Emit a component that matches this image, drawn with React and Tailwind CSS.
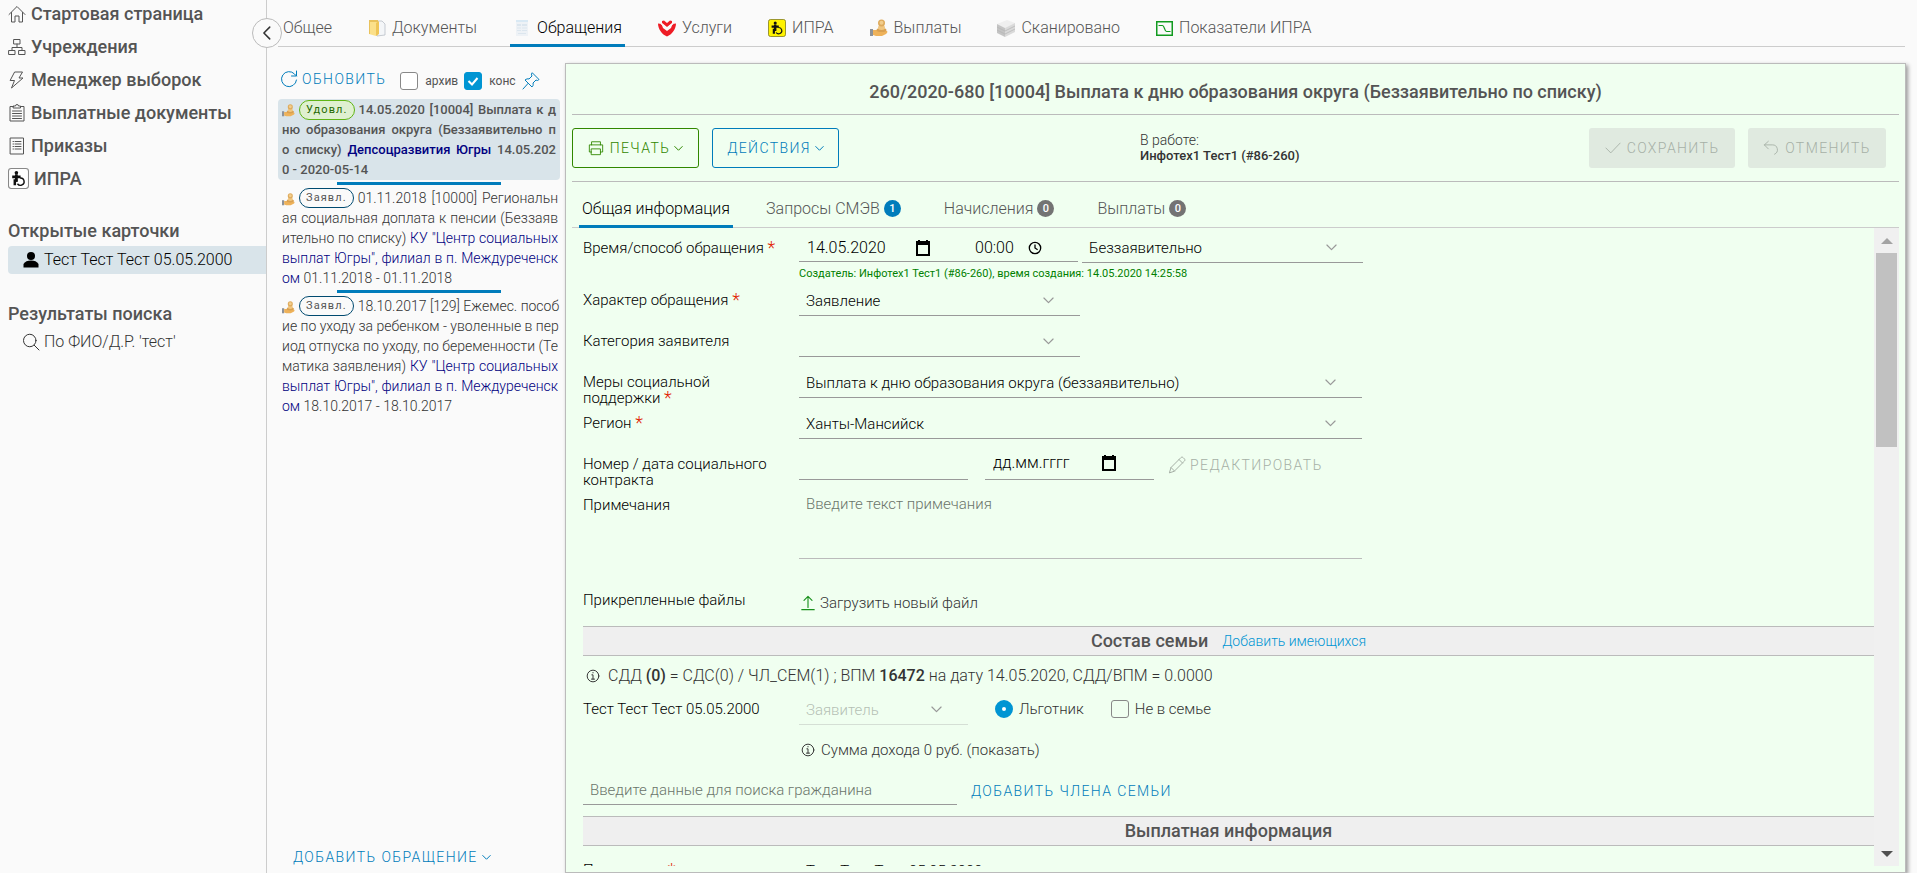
import React, { useState } from 'react'

// Outline icons, drawn on a 36 unit grid
const Icon = ({ children, className = 'w-[18px] h-[18px]', stroke = 2 }) => (
  <svg
    viewBox="0 0 36 36"
    fill="none"
    stroke="currentColor"
    strokeWidth={stroke}
    strokeLinecap="round"
    strokeLinejoin="round"
    className={`shrink-0 ${className}`}
    aria-hidden="true"
  >
    {children}
  </svg>
)

const HomeIcon = () => (
  <Icon><path d="M2 19 18 3l16 16M7 15v19h7V22h8v12h7V15" /></Icon>
)
const OrgIcon = () => (
  <Icon><path d="M12 3h12v9H12zM2 25h12v8H2zM22 25h12v8H22zM18 12v7M8 25v-6h20v6" /></Icon>
)
const BoltIcon = () => (
  <Icon><path d="M14 2h15l-7 12h8L7 34l6-15H5z" /></Icon>
)
const ClipboardIcon = () => (
  <Icon><path d="M11 5H4v29h28V5h-7M11 8h14V4h-4a3 3 0 0 0-6 0h-4zM9 14h18M9 19h18M9 24h18M9 29h18" /></Icon>
)
const ListIcon = () => (
  <Icon><path d="M5 2h26v32H5zM10 9h1M14 9h12M10 14h1M14 14h12M10 19h1M14 19h12M10 24h1M14 24h12" /></Icon>
)
const SearchIcon = () => (
  <Icon><path d="M28 15a12.500 12.500 0 1 1-25 0 12.500 12.500 0 0 1 25 0zM24.500 24.500 34 34" /></Icon>
)
const UserIcon = () => (
  <svg viewBox="0 0 36 36" fill="currentColor" className="w-[18px] h-[18px] shrink-0" aria-hidden="true">
    <circle cx="18" cy="10" r="8" />
    <path d="M3 33V26c3-5 8-7 15-7s12 2 15 7v7z" />
  </svg>
)
const RefreshIcon = () => (
  <Icon className="w-[18px] h-[18px]"><path d="M33 20a15 15 0 1 1-4-12l4 4M33 2v10H23" /></Icon>
)
const PinIcon = () => (
  <Icon className="w-[18px] h-[18px]"><path d="M21 2 34 15l-3 2-3-1-6 6c1 4 0 6-2 8L6 16c3-2 5-3 8-2l6-6-1-3zM12 23 2 34" /></Icon>
)
const PrinterIcon = () => (
  <Icon className="w-4 h-4"><path d="M8 11V4h20v7M8 27H3V11h30v16h-5M8 20h20v13H8z" /></Icon>
)
const CheckIcon = () => (
  <Icon className="w-4 h-4"><path d="M2 18 13 29 34 7" /></Icon>
)
const UndoIcon = () => (
  <Icon className="w-4 h-4"><path d="M12 3 3 11l9 9M3 11h18a11 11 0 0 1 5 21" /></Icon>
)
const PencilIcon = () => (
  <Icon className="w-[18px] h-[18px]"><path d="M3 33 6 23 26 3c1-1 3-1 4 0l3 3c1 1 1 3 0 4L13 30zM22 7l7 7M6 23l7 7" /></Icon>
)
const UploadIcon = () => (
  <Icon className="w-4 h-4 text-[#18901b]" stroke={2.5}><path d="M18 28V3M9 12l9-9 9 9M4 33h28" /></Icon>
)
const InfoIcon = () => (
  <Icon className="w-[14px] h-[14px]" stroke={2.5}>
    <circle cx="18" cy="18" r="15" />
    <path d="M18 9v1M15 15h3v11M14 26h8" />
  </Icon>
)
const ChevronDown = ({ className = 'w-[9px] h-[9px]' }) => (
  <Icon className={className} stroke={4}><path d="M3 10 18 25 33 10" /></Icon>
)
const CalendarIcon = () => (
  <svg viewBox="0 0 16 16" className="w-4 h-4" aria-hidden="true">
    <path d="M2 2h12v13H2z" fill="none" stroke="#000" strokeWidth="2" />
    <path d="M1 1h14v4H1zM3 0h2v2H3zM11 0h2v2h-2z" fill="#000" />
  </svg>
)
const ClockIcon = () => (
  <svg viewBox="0 0 16 16" className="w-[14px] h-[14px]" fill="none" stroke="#000" strokeWidth="1.500" aria-hidden="true">
    <circle cx="8" cy="8" r="6.500" />
    <path d="M8 4v4l3 2" />
  </svg>
)

const Wheelchair = () => (
  <g fill="none" stroke="#111" strokeWidth="2">
    <circle cx="8" cy="4.500" r="1.700" fill="#111" stroke="none" />
    <path d="M8 6v7M4 8.500h8" strokeWidth="2.600" />
    <path d="M9 12H6.500v4.500" strokeWidth="2.400" />
    <path d="M11.500 9.500a3.500 3.500 0 1 1-2.500 5.500" strokeWidth="1.300" />
  </g>
)
const IpraIcon = () => (
  <svg viewBox="0 0 20 20" className="w-[21px] h-[21px] shrink-0" aria-hidden="true">
    <rect x="0.500" y="0.500" width="19" height="19" rx="2.500" fill="#fff" stroke="#888" />
    <Wheelchair />
  </svg>
)
const IpraYellowIcon = () => (
  <svg viewBox="0 0 20 20" className="w-[18px] h-[18px] shrink-0" aria-hidden="true">
    <rect x="0.500" y="0.500" width="19" height="19" rx="2.500" fill="#fff200" stroke="#8a8420" />
    <Wheelchair />
  </svg>
)
const FolderIcon = () => (
  <svg viewBox="0 0 18 18" className="w-[18px] h-[18px] shrink-0" aria-hidden="true">
    <path d="M9 2h5l3 3v11l-8 1z" fill="#f4f6f8" stroke="#b9bfc6" strokeWidth="0.800" />
    <path d="M1 1h9v14l-2 2-7-2z" fill="#fbe08a" />
    <path d="M1 1h9v2H2v12H1z" fill="#e9c25c" />
    <path d="M8 4l3-2v13l-3 2z" fill="#efc557" />
  </svg>
)
const SheetIcon = () => (
  <svg viewBox="0 0 18 18" className="w-[18px] h-[18px] shrink-0" aria-hidden="true">
    <path d="M3 1h12v16H3z" fill="#eef2f6" />
    <path d="M3 1h12v2H3z" fill="#d9e9f4" />
    <path d="M4 5h4v2H4zM9 5h5v2H9zM4 8.500h4v1H4zM9 8.500h5v1H9zM4 11h4v1H4zM9 11h5v1H9zM5 14h8v1H5z" fill="#dce6ee" />
  </svg>
)
const ServicesIcon = () => (
  <svg viewBox="0 0 18 18" className="w-[18px] h-[18px] shrink-0" aria-hidden="true">
    <path d="M0 4.500 3.500 5 5 9l4 3 4-3 1.500-4 3.500-.5C18 10 14 15.500 9 17.500 4 15.500 0 10 0 4.500z" fill="#ee1c25" />
    <path d="M4 2 6 1.500 9 4l3-2.500 2 .5v2L9 8 4 4z" fill="#ee1c25" />
    <path d="M3 4.500 9 9.500l6-5" fill="none" stroke="#fafafa" strokeWidth="1.500" />
  </svg>
)
const CoinsIcon = ({ className = 'w-[18px] h-[18px]' }) => (
  <svg viewBox="0 0 18 18" className={`shrink-0 ${className}`} aria-hidden="true">
    <path d="M0 10h3v7H0z" fill="#8d9299" />
    <path d="M3 11h5l2 1h7c1 1 0 2-1 3l-4 2H6l-3-1z" fill="#eeb25a" />
    <ellipse cx="11.500" cy="11" rx="5" ry="2" fill="#d9a050" />
    <ellipse cx="11.500" cy="8.500" rx="3.500" ry="2.500" fill="#f0c680" />
    <circle cx="11.500" cy="4" r="3.500" fill="#deaa5c" />
    <circle cx="11.500" cy="3.800" r="2" fill="#f2cd8c" />
  </svg>
)
const StackIcon = () => (
  <svg viewBox="0 0 18 18" className="w-[18px] h-[18px] shrink-0" aria-hidden="true">
    <path d="M0 5 10 1l8 3-10 5z" fill="#efefef" />
    <path d="M0 5l8 4v9l-8-4z" fill="#c4c4c4" />
    <path d="M18 4 8 9v9l10-5z" fill="#dadada" />
    <path d="M0 8l8 4 10-5M0 11l8 4 10-5" fill="none" stroke="#b4b4b4" strokeWidth="0.700" />
  </svg>
)
const IndicatorsIcon = () => (
  <svg viewBox="0 0 17 15" className="w-[17px] h-[15px] shrink-0" fill="none" stroke="#119a1f" aria-hidden="true">
    <rect x="0.750" y="0.750" width="15.500" height="13.500" strokeWidth="1.500" />
    <path d="M2.500 4.500h4c2 0 2 6 4 6h4" strokeWidth="1.200" />
  </svg>
)

const menuItems = [
  { title: 'Стартовая страница', icon: <HomeIcon /> },
  { title: 'Учреждения', icon: <OrgIcon /> },
  { title: 'Менеджер выборок', icon: <BoltIcon /> },
  { title: 'Выплатные документы', icon: <ClipboardIcon /> },
  { title: 'Приказы', icon: <ListIcon /> },
  { title: 'ИПРА', icon: <IpraIcon /> },
]

const cardTabs = [
  { title: 'Общее' },
  { title: 'Документы', icon: <FolderIcon /> },
  { title: 'Обращения', icon: <SheetIcon /> },
  { title: 'Услуги', icon: <ServicesIcon /> },
  { title: 'ИПРА', icon: <IpraYellowIcon /> },
  { title: 'Выплаты', icon: <CoinsIcon /> },
  { title: 'Сканировано', icon: <StackIcon /> },
  { title: 'Показатели ИПРА', icon: <IndicatorsIcon /> },
]

// Each line is [text, organisation, text after it]
const requests = [
  {
    id: 680,
    status: 'Удовл.',
    approved: true,
    lines: [
      ['14.05.2020 [10004] Выплата к д'],
      ['ню образования округа (Беззаявительно п'],
      ['о списку) ', 'Депсоцразвития Югры', ' 14.05.202'],
      ['0 - 2020-05-14'],
    ],
  },
  {
    id: 520,
    status: 'Заявл.',
    lines: [
      ['01.11.2018 [10000] Региональн'],
      ['ая социальная доплата к пенсии (Беззаяв'],
      ['ительно по списку) ', 'КУ "Центр социальных'],
      ['', 'выплат Югры", филиал в п. Междуреченск'],
      ['', 'ом', ' 01.11.2018 - 01.11.2018'],
    ],
  },
  {
    id: 310,
    status: 'Заявл.',
    lines: [
      ['18.10.2017 [129] Ежемес. пособ'],
      ['ие по уходу за ребенком - уволенные в пер'],
      ['иод отпуска по уходу, по беременности (Те'],
      ['матика заявления) ', 'КУ "Центр социальных'],
      ['', 'выплат Югры", филиал в п. Междуреченск'],
      ['', 'ом', ' 18.10.2017 - 18.10.2017'],
    ],
  },
]

const infoTabs = [
  { title: 'Общая информация' },
  { title: 'Запросы СМЭВ', count: 1 },
  { title: 'Начисления', count: 0 },
  { title: 'Выплаты', count: 0 },
]

const Sidebar = () => (
  <aside className="w-[267px] shrink-0 border-r border-[#ccc] pl-2">
    <nav>
      {menuItems.map((item) => (
        <a
          key={item.title}
          href="#"
          className="flex items-center gap-[5px] h-[33px] pb-1.5 text-lg leading-6 font-medium text-[#545454]"
        >
          {item.icon}
          {item.title}
        </a>
      ))}
    </nav>
    <h2 className="mt-[21px] text-lg leading-6 font-medium text-[#545454]">Открытые карточки</h2>
    <a href="#" className="flex items-center gap-1 mt-[3px] pl-3.5 h-7 rounded-l bg-[#d9e4ea] text-base text-black">
      <UserIcon />
      Тест Тест Тест 05.05.2000
    </a>
    <h2 className="mt-7 text-lg leading-6 font-medium text-[#545454]">Результаты поиска</h2>
    <a href="#" className="flex items-center gap-1 mt-1 pl-3.5 h-6 text-base text-[#333]">
      <SearchIcon />
      По ФИО/Д.Р. 'тест'
    </a>
  </aside>
)

const RequestList = () => {
  const [archive, setArchive] = useState(false)
  const [cons, setCons] = useState(true)

  return (
    <section className="w-[282px] shrink-0 flex flex-col">
      <div className="flex items-center h-9 mt-4 pb-1 text-[#007cbb]">
        <button type="button" className="flex items-center gap-1 pl-0.5 text-sm tracking-widest">
          <RefreshIcon />
          ОБНОВИТЬ
        </button>
        <label className="flex items-center gap-[7px] ml-3.5 pt-1 text-xs font-normal text-[#545454]">
          <input
            type="checkbox"
            checked={archive}
            onChange={(e) => setArchive(e.target.checked)}
            className="appearance-none w-[18px] h-[18px] rounded-[3px] border border-[#888] bg-white checked:bg-[#0095d3]"
          />
          архив
        </label>
        <label className="relative flex items-center gap-[7px] ml-1.5 pt-1 text-xs font-normal text-[#545454]">
          <input
            type="checkbox"
            checked={cons}
            onChange={(e) => setCons(e.target.checked)}
            className="appearance-none w-[18px] h-[18px] rounded-[3px] border border-[#888] bg-white checked:bg-[#0095d3] checked:border-[#0095d3]"
          />
          {cons && (
            <svg viewBox="0 0 18 18" className="absolute left-0 w-[18px] h-[18px] pointer-events-none" aria-hidden="true">
              <path d="M4.500 9 8 12.500 13.500 6" fill="none" stroke="#fff" strokeWidth="2" />
            </svg>
          )}
          конс
        </label>
        <button type="button" aria-label="Закрепить" className="ml-1.5 pt-1">
          <PinIcon />
        </button>
      </div>

      {requests.map((item, index) => (
        <React.Fragment key={item.id}>
          {index > 0 && <div className="w-[164px] h-[3px] mt-0.5 mx-auto shrink-0 bg-[#007cbb]" />}
          <article
            className={`rounded-sm leading-5 ${
              item.approved
                ? 'px-1 pt-px bg-[#d9e4ea] text-[13px] font-medium text-[#545454]'
                : 'pl-1 pr-0.5 pt-[3px] text-sm text-[#333]'
            }`}
          >
            {item.lines.map(([text, org, rest], i) => (
              <div
                key={i}
                className={`whitespace-nowrap ${i < item.lines.length - 1 ? '[text-align-last:justify]' : ''}`}
              >
                {i === 0 && (
                  <>
                    <CoinsIcon className="inline-block w-[13px] h-[13px] mr-1" />
                    <span
                      className={`inline-block align-top h-5 px-1.5 mr-1 rounded-full border text-[11px] leading-[18px] font-normal tracking-widest ${
                        item.approved ? 'border-[#60b515] bg-[#dff0d0] text-[#266900]' : 'border-[#004a70] text-[#545454]'
                      }`}
                    >
                      {item.status}
                    </span>
                  </>
                )}
                {text}
                {org && <span className="text-[#000080]">{org}</span>}
                {rest}
              </div>
            ))}
          </article>
        </React.Fragment>
      ))}

      <button type="button" className="flex items-center gap-1 mt-auto mb-1.5 ml-[15px] text-sm tracking-widest text-[#007cbb]">
        ДОБАВИТЬ ОБРАЩЕНИЕ
        <ChevronDown />
      </button>
    </section>
  )
}

const Required = () => <span className="inline-block h-4 align-top text-lg leading-4 text-[#e12200]">*</span>

const Row = ({ label, required, htmlFor, children }) => (
  <div className="flex min-h-[41px] text-[15px]">
    <label htmlFor={htmlFor} className="w-[216px] shrink-0 pt-[9px] pr-4 leading-4 text-black">
      {label} {required && <Required />}
    </label>
    {children}
  </div>
)

const Select = ({ id, value, label, disabled, arrow = 'right-[26px]', className }) => (
  <div className={`relative h-[33px] border-b ${disabled ? 'border-[#d5dfd5] text-[#b5bfb5]' : 'border-[#999] text-black'} ${className}`}>
    <select
      id={id}
      aria-label={label}
      defaultValue={value}
      disabled={disabled}
      className="appearance-none w-full h-8 pt-1 pl-[7px] pr-10 bg-transparent text-[15px] opacity-100"
    >
      <option>{value}</option>
    </select>
    <span className={`absolute top-3 pointer-events-none text-[#999] ${arrow}`}>
      <ChevronDown className="w-[11px] h-[11px]" />
    </span>
  </div>
)

const SectionTitle = ({ title, children }) => (
  <div className="flex items-center justify-center gap-3.5 h-[30px] border-y border-[#bbb] bg-[#efefef]">
    <h3 className="text-lg leading-6 font-medium text-[#545454]">{title}</h3>
    {children}
  </div>
)

const GeneralInfo = () => {
  const [beneficiary, setBeneficiary] = useState(true)
  const [notInFamily, setNotInFamily] = useState(false)

  return (
    <form className="flex-1 min-w-0 pl-[11px] pt-px" onSubmit={(e) => e.preventDefault()}>
      <div className="flex text-[15px]">
        <label htmlFor="date" className="w-[216px] shrink-0 pt-[11px] leading-4 text-black">
          Время/способ обращения <Required />
        </label>
        <div>
          <div className="flex gap-1">
            <div className="flex items-center w-[279px] h-[33px] pt-1.5 border-b border-[#999]">
              <input id="date" defaultValue="14.05.2020" className="w-[108px] ml-2 bg-transparent text-base text-black outline-none" />
              <button type="button" aria-label="Выбрать дату"><CalendarIcon /></button>
              <input aria-label="Время" defaultValue="00:00" className="w-[53px] ml-11 bg-transparent text-base text-black outline-none" />
              <button type="button" aria-label="Выбрать время"><ClockIcon /></button>
            </div>
            <Select label="Способ обращения" value="Беззаявительно" className="w-[281px] mt-px" />
          </div>
          <p className="h-5 text-[11px] leading-[22px] font-normal text-[#008000]">
            Создатель: Инфотех1 Тест1 (#86-260), время создания: 14.05.2020 14:25:58
          </p>
        </div>
      </div>

      <Row label="Характер обращения" required htmlFor="kind">
        <Select id="kind" value="Заявление" className="w-[281px]" />
      </Row>
      <Row label="Категория заявителя" htmlFor="category">
        <Select id="category" value="" className="w-[281px]" />
      </Row>
      <Row label="Меры социальной поддержки" required htmlFor="measure">
        <Select id="measure" value="Выплата к дню образования округа (беззаявительно)" className="w-[563px]" />
      </Row>
      <Row label="Регион" required htmlFor="region">
        <Select id="region" value="Ханты-Мансийск" className="w-[563px]" />
      </Row>
      <Row label="Номер / дата социального контракта" htmlFor="contract">
        <input id="contract" className="w-[169px] h-[33px] px-2 border-b border-[#999] bg-transparent outline-none" />
        <div className="flex items-center w-[169px] h-[33px] ml-[17px] border-b border-[#999]">
          <input aria-label="Дата контракта" placeholder="дд.мм.гггг" className="w-[108px] ml-2 bg-transparent text-base placeholder:text-black outline-none" />
          <button type="button" aria-label="Выбрать дату контракта"><CalendarIcon /></button>
        </div>
        <button type="button" disabled className="flex items-center gap-1 h-9 ml-3.5 text-sm tracking-widest text-[#a6b0a6]">
          <PencilIcon />
          РЕДАКТИРОВАТЬ
        </button>
      </Row>
      <Row label="Примечания" htmlFor="notes">
        <textarea
          id="notes"
          placeholder="Введите текст примечания"
          className="w-[563px] h-[71px] mb-6 px-[7px] pt-1.5 resize-none border-b border-[#bbb] bg-transparent leading-5 placeholder:text-[#6b756b] outline-none"
        />
      </Row>
      <Row label="Прикрепленные файлы">
        <button type="button" className="flex items-center gap-1 h-10 pl-px text-[#333]">
          <UploadIcon />
          Загрузить новый файл
        </button>
      </Row>

      <div className="mt-0.5">
        <SectionTitle title="Состав семьи">
          <a href="#" className="text-sm text-[#0095d3]">Добавить имеющихся</a>
        </SectionTitle>
      </div>
      <p className="flex items-center gap-2 h-9 pt-1 pl-[3px] text-base text-[#333]">
        <InfoIcon />
        <span>
          СДД <b className="font-medium">(0)</b> = СДС(0) / ЧЛ_СЕМ(1) ; ВПМ <b className="font-medium">16472</b> на дату 14.05.2020, СДД/ВПМ = 0.0000
        </span>
      </p>
      <Row label="Тест Тест Тест 05.05.2000" htmlFor="member">
        <Select id="member" value="Заявитель" disabled className="w-[169px]" />
        <label className="flex items-center gap-1.5 h-[34px] ml-[27px] text-[#333]">
          <input
            type="radio"
            checked={beneficiary}
            onChange={() => setBeneficiary(true)}
            className="appearance-none w-[18px] h-[18px] rounded-full border-[7px] border-[#0095d3] bg-white"
          />
          Льготник
        </label>
        <label className="flex items-center gap-1.5 h-[34px] ml-[27px] text-[#333]">
          <input
            type="checkbox"
            checked={notInFamily}
            onChange={(e) => setNotInFamily(e.target.checked)}
            className="appearance-none w-[18px] h-[18px] rounded-[3px] border border-[#888] checked:bg-[#0095d3]"
          />
          Не в семье
        </label>
      </Row>
      <button type="button" className="flex items-center gap-1.5 h-[34px] ml-[218px] text-[15px] text-[#333]">
        <InfoIcon />
        Сумма дохода 0 руб. (показать)
      </button>
      <div className="flex items-center mt-[5px] text-[15px]">
        <input
          aria-label="Поиск гражданина"
          placeholder="Введите данные для поиска гражданина"
          className="w-[374px] h-[33px] px-[7px] pt-1 border-b border-[#999] bg-transparent placeholder:text-[#6b756b] outline-none"
        />
        <button type="button" className="ml-3.5 pt-1 text-sm tracking-widest text-[#007cbb]">ДОБАВИТЬ ЧЛЕНА СЕМЬИ</button>
      </div>

      <div className="mt-[11px] mb-[7px]">
        <SectionTitle title="Выплатная информация" />
      </div>
      <Row label="Получатель" required htmlFor="payee">
        <Select id="payee" value="Тест Тест Тест 05.05.2000" className="w-[563px]" />
      </Row>
    </form>
  )
}

const Scrollbar = () => (
  <div className="flex flex-col items-center w-[25px] shrink-0 bg-[#f0f0f0]" aria-hidden="true">
    <div className="flex items-center justify-center h-[25px]">
      <div className="border-x-[6px] border-b-[6px] border-x-transparent border-b-[#a3a3a3]" />
    </div>
    <div className="w-[21px] h-[194px] bg-[#c1c1c1]" />
    <div className="flex items-center justify-center h-[25px] mt-auto">
      <div className="border-x-[6px] border-t-[6px] border-x-transparent border-t-[#505050]" />
    </div>
  </div>
)

const RequestCard = () => (
  <section className="flex-1 min-w-0 flex flex-col ml-[5px] mt-4 mr-[11px] px-1.5 pb-1.5 border border-[#bbb] bg-[#f0fff0] shadow-[2px_2px_4px_#999]">
    <h1 className="h-[51px] pt-4 border-b border-[#bbb] text-center text-lg leading-6 font-medium text-[#545454]">
      260/2020-680 [10004] Выплата к дню образования округа (Беззаявительно по списку)
    </h1>
    <div className="flex items-center h-[67px] border-b border-[#bbb] text-sm">
      <button type="button" className="flex items-center justify-center gap-1.5 w-[127px] h-10 rounded-[3px] border border-[#318700] tracking-widest text-[#318700]">
        <PrinterIcon />
        <span className="flex items-center gap-1">ПЕЧАТЬ <ChevronDown /></span>
      </button>
      <button type="button" className="flex items-center justify-center gap-1 w-[127px] h-10 ml-[13px] rounded-[3px] border border-[#007cbb] tracking-widest text-[#007cbb]">
        ДЕЙСТВИЯ
        <ChevronDown />
      </button>
      <div className="ml-auto mr-[286px] leading-4 text-[#333]">
        <p>В работе:</p>
        <p className="w-[163px] text-[13px] font-medium">Инфотех1 Тест1 (#86-260)</p>
      </div>
      <button type="button" disabled className="flex items-center justify-center gap-1.5 w-[146px] h-10 rounded-[3px] bg-[#e0eae0] tracking-widest text-[#a6b0a6]">
        <CheckIcon />
        СОХРАНИТЬ
      </button>
      <button type="button" disabled className="flex items-center justify-center gap-1.5 w-[138px] h-10 mx-[13px] rounded-[3px] bg-[#e0eae0] tracking-widest text-[#a6b0a6]">
        <UndoIcon />
        ОТМЕНИТЬ
      </button>
    </div>
    <div role="tablist" className="flex gap-[30px] h-[46px] pl-[7px] shrink-0 border-b border-[#ccc] text-base">
      {infoTabs.map((tab, index) => (
        <button
          key={tab.title}
          type="button"
          role="tab"
          aria-selected={index === 0}
          className={`flex items-center gap-1 pl-[3px] pt-2.5 h-[46px] border-b-[3px] ${
            index === 0 ? 'pr-[3px] border-[#007cbb] text-black' : 'pr-2.5 border-transparent text-[#555]'
          }`}
        >
          {tab.title}
          {tab.count !== undefined && (
            <span
              className={`flex items-center justify-center w-[17px] h-[17px] rounded-full text-[11px] leading-4 font-medium text-white ${
                tab.count > 0 ? 'bg-[#007cbb]' : 'bg-[#737373]'
              }`}
            >
              {tab.count}
            </span>
          )}
        </button>
      ))}
    </div>
    <div className="flex flex-1 min-h-0 overflow-hidden">
      <GeneralInfo />
      <Scrollbar />
    </div>
  </section>
)

export default function App() {
  return (
    <div className="flex h-screen overflow-hidden bg-[#fafafa] font-['Roboto',sans-serif] font-light">
      <Sidebar />
      <main className="relative flex-1 min-w-0 flex flex-col pl-[11px]">
        <button
          type="button"
          aria-label="Свернуть меню"
          className="absolute -left-[15px] top-[18px] z-10 flex items-center justify-center w-[30px] h-[30px] rounded-full border border-[#bbb] bg-[#fafafa] text-[#333]"
        >
          <Icon className="w-3.5 h-3.5" stroke={4}><path d="M25 3 10 18l15 15" /></Icon>
        </button>
        <div role="tablist" className="flex gap-[30px] h-[47px] mr-3 pl-0.5 shrink-0 border-b border-[#ccc] text-base">
          {cardTabs.map((tab) => {
            const active = tab.title === 'Обращения'
            return (
              <button
                key={tab.title}
                type="button"
                role="tab"
                aria-selected={active}
                className={`flex items-center gap-1.5 h-[47px] px-[3px] pt-3 border-b-[3px] ${
                  active ? 'border-[#007cbb] text-black' : 'border-transparent text-[#555]'
                }`}
              >
                {tab.icon}
                {tab.title}
              </button>
            )
          })}
        </div>
        <div className="flex flex-1 min-h-0">
          <RequestList />
          <RequestCard />
        </div>
      </main>
    </div>
  )
}
